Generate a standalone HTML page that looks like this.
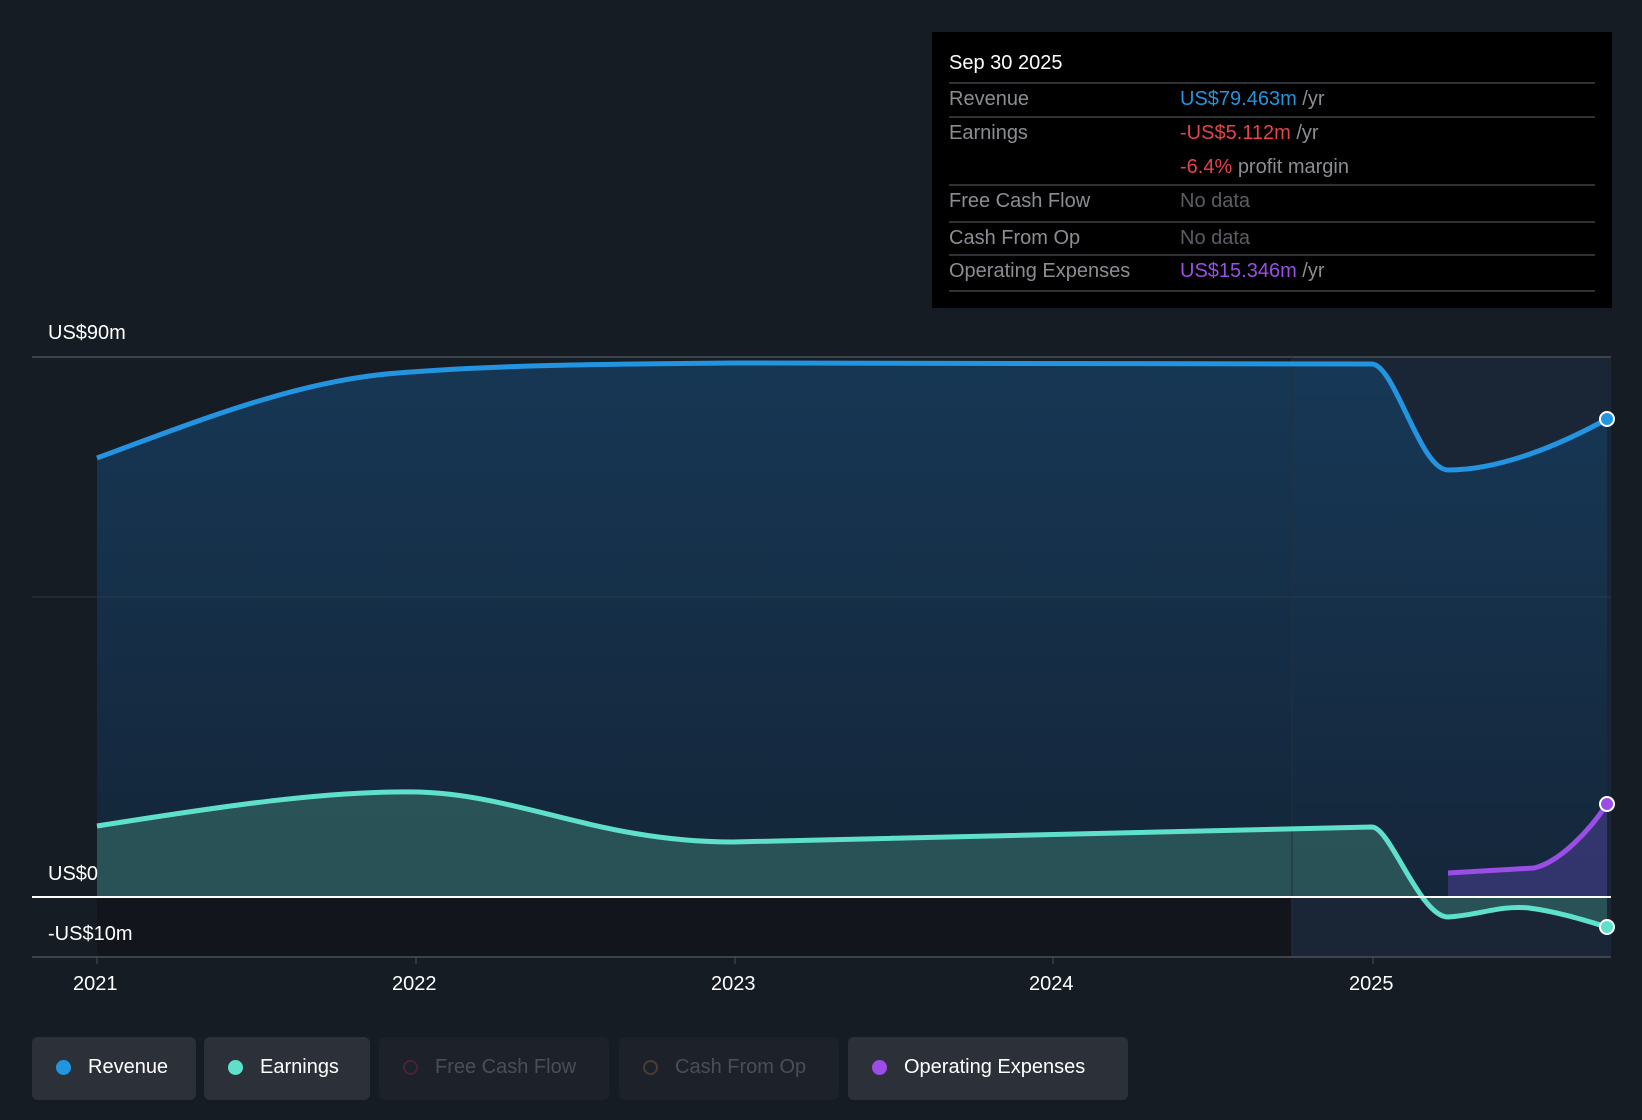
<!DOCTYPE html>
<html><head><meta charset="utf-8"><style>
body{margin:0;width:1642px;height:1120px;background:#161c24;font-family:"Liberation Sans",sans-serif;overflow:hidden;position:relative}
.tt{position:absolute;left:932px;top:32px;width:680px;height:276px;background:#000}
.t{position:absolute;font-size:20px;color:#8a8e93;white-space:nowrap}
.ln{position:absolute;left:17px;width:646px;height:2px;background:#2e3236}
.lg{position:absolute;top:1037px;height:63px;border-radius:6px;background:#2c3139;color:#fff;font-size:20px;line-height:60px;box-sizing:border-box;padding-left:56px}
.lg i{position:absolute;left:24px;top:24px;width:15px;height:15px;border-radius:50%}
.ax{position:absolute;color:#fff;font-size:20px}
</style></head><body>
<svg width="1642" height="1120" style="position:absolute;left:0;top:0">
<defs>
<linearGradient id="rg" x1="0" y1="0" x2="0" y2="1"><stop offset="0" stop-color="#163a5a"/><stop offset="1" stop-color="#14263a"/></linearGradient>
</defs>
<rect x="1292" y="357" width="319" height="600" fill="#1a2636"/>
<path d="M97,458 C200,420 300,380 398,373 C500,365 600,364 733,363 L1372,364 C1395,365 1420,470 1448,470 C1500,470 1560,445 1607,419 L1607,897 L97,897 Z" fill="url(#rg)" opacity="0.9"/>
<path d="M97,826 C200,810 320,790 419,792 C520,795 600,842 733,842 L1372,827 C1390,827 1420,917 1448,917 C1480,915 1500,905 1529,908 C1560,912 1590,922 1607,927 L1607,897 L97,897 Z" fill="#2d5a5c" opacity="0.85"/>
<path d="M1448,873 L1534,868 C1560,862 1590,830 1607,804 L1607,897 L1448,897 Z" fill="#3a3a78" opacity="0.8"/>
<rect x="97" y="897" width="1195" height="60" fill="#12161c"/>
<line x1="32" y1="357" x2="1611" y2="357" stroke="#4a5058" stroke-width="1.5"/>
<line x1="32" y1="597" x2="1611" y2="597" stroke="#2c3a48" stroke-width="1"/>
<line x1="1292" y1="357" x2="1292" y2="957" stroke="#24303c" stroke-width="1"/>
<line x1="32" y1="957" x2="1611" y2="957" stroke="#4a5058" stroke-width="1.5"/>
<g stroke="#4a5058"><line x1="97" y1="957" x2="97" y2="964"/><line x1="416" y1="957" x2="416" y2="964"/><line x1="735" y1="957" x2="735" y2="964"/><line x1="1053" y1="957" x2="1053" y2="964"/><line x1="1373" y1="957" x2="1373" y2="964"/></g>
<path d="M97,458 C200,420 300,380 398,373 C500,365 600,364 733,363 L1372,364 C1395,365 1420,470 1448,470 C1500,470 1560,445 1607,419" fill="none" stroke="#2394e0" stroke-width="5"/>
<path d="M97,826 C200,810 320,790 419,792 C520,795 600,842 733,842 L1372,827 C1390,827 1420,917 1448,917 C1480,915 1500,905 1529,908 C1560,912 1590,922 1607,927" fill="none" stroke="#5fe0cb" stroke-width="5"/>
<path d="M1448,873 L1534,868 C1560,862 1590,830 1607,804" fill="none" stroke="#9b4de8" stroke-width="5"/>
<line x1="32" y1="897" x2="1611" y2="897" stroke="#fff" stroke-width="2"/>
<circle cx="1607" cy="419" r="7" fill="#2394e0" stroke="#fff" stroke-width="2"/>
<circle cx="1607" cy="927" r="7" fill="#5fe0cb" stroke="#fff" stroke-width="2"/>
<circle cx="1607" cy="804" r="7" fill="#9b4de8" stroke="#fff" stroke-width="2"/>
</svg>
<div class="ax" style="left:48px;top:322px">US$90m</div>
<div class="ax" style="left:48px;top:863px">US$0</div>
<div class="ax" style="left:48px;top:923px">-US$10m</div>
<div class="ax" style="left:73px;top:973px">2021</div>
<div class="ax" style="left:392px;top:973px">2022</div>
<div class="ax" style="left:711px;top:973px">2023</div>
<div class="ax" style="left:1029px;top:973px">2024</div>
<div class="ax" style="left:1349px;top:973px">2025</div>
<div class="tt">
<div class="t" style="left:17px;top:20px;color:#fff">Sep 30 2025</div>
<div class="ln" style="top:50px"></div>
<div class="t" style="left:17px;top:56px">Revenue</div><div class="t" style="left:248px;top:56px;color:#2394e0">US$79.463m <span style="color:#8a8e93">/yr</span></div>
<div class="ln" style="top:84px"></div>
<div class="t" style="left:17px;top:90px">Earnings</div><div class="t" style="left:248px;top:90px;color:#e8424a">-US$5.112m <span style="color:#8a8e93">/yr</span></div>
<div class="t" style="left:248px;top:124px;color:#e8424a">-6.4% <span style="color:#8a8e93">profit margin</span></div>
<div class="ln" style="top:152px"></div>
<div class="t" style="left:17px;top:158px">Free Cash Flow</div><div class="t" style="left:248px;top:158px;color:#5a5e63">No data</div>
<div class="ln" style="top:189px"></div>
<div class="t" style="left:17px;top:195px">Cash From Op</div><div class="t" style="left:248px;top:195px;color:#5a5e63">No data</div>
<div class="ln" style="top:222px"></div>
<div class="t" style="left:17px;top:228px">Operating Expenses</div><div class="t" style="left:248px;top:228px;color:#9b4de8">US$15.346m <span style="color:#8a8e93">/yr</span></div>
<div class="ln" style="top:258px"></div>
</div>
<div class="lg" style="left:32px;width:164px"><i style="background:#2394e0;top:23px"></i>Revenue</div>
<div class="lg" style="left:204px;width:166px"><i style="background:#5fe0cb;top:23px"></i>Earnings</div>
<div class="lg" style="left:379px;width:230px;background:#1d2129;color:#4a4e55"><i style="border:2px solid #4a2238;box-sizing:border-box;top:23px"></i>Free Cash Flow</div>
<div class="lg" style="left:619px;width:220px;background:#1d2129;color:#4a4e55"><i style="border:2px solid #4a3e2c;box-sizing:border-box;top:23px"></i>Cash From Op</div>
<div class="lg" style="left:848px;width:280px"><i style="background:#9b4de8;top:23px"></i>Operating Expenses</div>
</body></html>
